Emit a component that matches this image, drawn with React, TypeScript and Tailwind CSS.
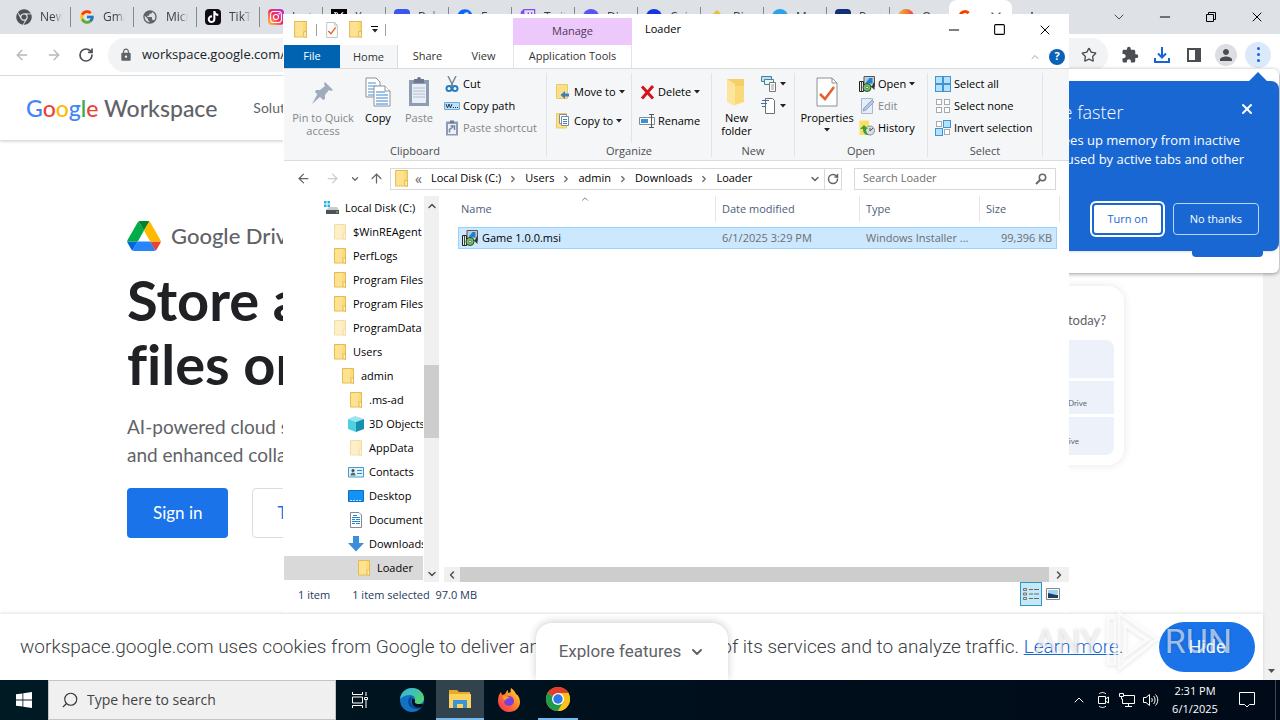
import type { ReactNode } from "react";
import {
    ArrowLeft,
    ArrowRight,
    ArrowUp,
    ChevronDown,
    ChevronLeft,
    ChevronRight,
    ChevronUp,
    Minus,
    Plus,
    RotateCw,
    Search,
    Square,
    Star,
    X,
} from "lucide-react";
import { FaChrome, FaFacebook, FaTwitch } from "react-icons/fa";
import { FaTiktok, FaXTwitter } from "react-icons/fa6";
import { FcGoogle } from "react-icons/fc";
import { BsInstagram } from "react-icons/bs";
import { MdExtension, MdLock, MdPerson, MdPublic } from "react-icons/md";

type BrowserTab = {
    title: string;
    icon: ReactNode;
};

const Dot = ({ className }: { className: string }) => (
    <span className={`block size-4 rounded-full ${className}`} />
);

const browserTabs: BrowserTab[] = [
    { title: "New Tab", icon: <FaChrome className="size-4 text-[#4d5156]" /> },
    { title: "Gmail", icon: <FcGoogle className="size-4" /> },
    { title: "Microsoft", icon: <MdPublic className="size-4 text-[#5f6368]" /> },
    {
        title: "TikTok",
        icon: (
            <span className="flex size-4 items-center justify-center rounded bg-[#120b14]">
                <FaTiktok className="size-3 text-white" />
            </span>
        ),
    },
    {
        title: "Instagram",
        icon: (
            <span className="flex size-4 items-center justify-center rounded bg-linear-to-tr from-[#ffc233] via-[#f5215c] to-[#b01be0]">
                <BsInstagram className="size-3 text-white" />
            </span>
        ),
    },
    {
        title: "X",
        icon: (
            <span className="flex size-4 items-center justify-center bg-black">
                <FaXTwitter className="size-3 text-white" />
            </span>
        ),
    },
    { title: "Behance", icon: <span className="block size-4 rounded bg-[#3d55f0]" /> },
    { title: "Facebook", icon: <FaFacebook className="size-4 text-[#0866ff]" /> },
    { title: "Twitch", icon: <FaTwitch className="size-4 text-[#8c44f7]" /> },
    { title: "Discord", icon: <Dot className="bg-[#5a54ee]" /> },
    { title: "Coinbase", icon: <Dot className="bg-[#1338e0]" /> },
    { title: "Binance", icon: <span className="m-[3px] block size-[10px] rotate-45 bg-[#f3ba2f]" /> },
    { title: "Messages", icon: <Dot className="bg-[#2aa1ea]" /> },
    { title: "PayPal", icon: <span className="block size-4 rounded bg-[#12307a]" /> },
    { title: "Opera", icon: <Dot className="bg-linear-to-r from-[#f7b731] to-[#e5383b]" /> },
];

const TabStrip = () => (
    <div className="flex h-[34px] shrink-0 items-center bg-[#dee1e6] pl-2">
        {browserTabs.map(tab => (
            <button key={tab.title} className="flex w-[63px] shrink-0 items-center gap-2 pl-2">
                <span className="shrink-0">{tab.icon}</span>
                <span className="w-[22px] overflow-hidden mask-r-from-60% text-left text-xs whitespace-nowrap text-[#3c4043]">
                    {tab.title}
                </span>
                <span className="h-5 w-px shrink-0 bg-[#85888d]" />
            </button>
        ))}
        <button className="-ml-1 flex h-[34px] w-[63px] shrink-0 items-center justify-between rounded-t-lg bg-white px-2">
            <FcGoogle className="size-4" />
            <X className="size-4 text-[#5f6368]" />
        </button>
        <button aria-label="New tab" className="ml-3">
            <Plus className="size-4 text-[#3c4043]" />
        </button>
        <div className="ml-auto flex gap-[30px] pr-[15px] text-black">
            <button aria-label="Search tabs">
                <ChevronDown className="size-4" strokeWidth={1} />
            </button>
            <button aria-label="Minimize">
                <Minus className="size-4" strokeWidth={1.5} />
            </button>
            <button aria-label="Restore">
                <svg viewBox="0 0 16 16" className="size-4" fill="none" stroke="currentColor">
                    <path d="M3.5 5.500h7v7h-7zM5.500 5.500v-2h7v7h-2" />
                </svg>
            </button>
            <button aria-label="Close">
                <X className="size-4" strokeWidth={1.5} />
            </button>
        </div>
    </div>
);

const Toolbar = () => (
    <div className="flex h-[42px] shrink-0 items-center border-b border-[#dcdee0] bg-white pr-[6px]">
        <div className="flex items-center gap-4 px-[14px]">
            <button aria-label="Back">
                <ArrowLeft className="size-4 text-[#b5b7ba]" />
            </button>
            <button aria-label="Forward">
                <ArrowRight className="size-4 text-[#b5b7ba]" />
            </button>
            <button aria-label="Reload">
                <RotateCw className="size-4 text-[#4a4d51]" strokeWidth={2.5} />
            </button>
        </div>
        <label className="flex h-[34px] flex-1 items-center gap-[9px] rounded-full bg-[#f1f3f4] px-[11px]">
            <MdLock className="size-[14px] text-[#5f6368]" />
            <input
                aria-label="Address"
                defaultValue="workspace.google.com/products/drive"
                className="min-w-0 flex-1 bg-transparent text-[13px] text-[#202124] outline-none"
            />
            <Star className="size-4 text-[#4a4d51]" />
        </label>
        <div className="flex items-center pl-[6px] text-[#4a4d51]">
            <button aria-label="Extensions" className="flex w-8 justify-center">
                <MdExtension className="size-[18px]" />
            </button>
            <button aria-label="Downloads" className="flex w-8 justify-center">
                <svg viewBox="0 0 16 16" className="size-4" fill="none" stroke="#1a62d6" strokeWidth="2">
                    <path d="M8 0v10M4 6.500l4 4 4-4M1 11v4h14v-4" />
                </svg>
            </button>
            <button aria-label="Side panel" className="flex w-8 justify-center">
                <svg viewBox="0 0 16 16" className="size-4">
                    <path d="M1 1h14v14H1zm2 2v10h6V3z" fill="currentColor" fillRule="evenodd" />
                </svg>
            </button>
            <button aria-label="Profile" className="flex w-8 justify-center">
                <span className="flex size-[22px] items-center justify-center rounded-full bg-[#dcdee3]">
                    <MdPerson className="size-[18px]" />
                </span>
            </button>
            <button aria-label="Menu" className="flex w-8 justify-center">
                <span className="flex size-[26px] flex-col items-center justify-center gap-[3px] rounded-full bg-[#dbe9fb]">
                    <span className="size-[3px] rounded-full bg-[#1a62d6]" />
                    <span className="size-[3px] rounded-full bg-[#1a62d6]" />
                    <span className="size-[3px] rounded-full bg-[#1a62d6]" />
                </span>
            </button>
        </div>
    </div>
);

const MemoryBubble = () => (
    <div className="absolute top-[69px] right-px w-[340px] rounded-md bg-white pt-3 pb-[22px] shadow-[0_1px_4px_rgba(0,0,0,0.4)]">
        <span className="absolute top-[6px] right-[14px] size-[14px] rotate-45 bg-[#1967d2]" />
        <div className="relative rounded-lg bg-[#1967d2] px-5 pt-5 pb-4 text-right text-white shadow">
            <button aria-label="Dismiss" className="absolute top-5 right-[24px]">
                <X className="size-4" strokeWidth={3} />
            </button>
            <h2 className="pr-[141px] text-lg leading-[22px] font-light whitespace-nowrap">Make Chrome faster</h2>
            <p className="mt-2 h-[72px] pr-[15px] text-[13px] leading-[19px] whitespace-nowrap">
                <span className="pr-1">Memory Saver frees up memory from inactive</span>
                <br />
                tabs so it can be used by active tabs and other
            </p>
            <div className="flex justify-end gap-[10px] text-[11px] leading-4">
                <button className="rounded border-2 border-[#1967d2] bg-white px-[13px] py-[6px] text-[#1967d2] ring-2 ring-white">
                    Turn on
                </button>
                <button className="rounded border border-[#bcd4f5] px-4 py-[6px]">No thanks</button>
            </div>
        </div>
        <span className="absolute right-4 bottom-4 h-2 w-[71px] rounded-b bg-[#1967d2]" />
    </div>
);

const DriveLogo = () => (
    <svg viewBox="0 0 87.3 78" className="h-[30px] w-[34px]">
        <path d="m6.6 66.85 3.85 6.65c.8 1.4 1.95 2.5 3.3 3.3l13.75-23.8h-27.5c0 1.55.4 3.1 1.2 4.5z" fill="#0066da" />
        <path d="m43.65 25-13.75-23.8c-1.35.8-2.5 1.9-3.3 3.3l-25.4 44a9.06 9.06 0 0 0 -1.2 4.5h27.5z" fill="#00ac47" />
        <path d="m73.55 76.8c1.35-.8 2.5-1.9 3.3-3.3l1.6-2.75 7.65-13.25c.8-1.4 1.2-2.95 1.2-4.5h-27.502l5.852 11.5z" fill="#ea4335" />
        <path d="m43.65 25 13.75-23.8c-1.35-.8-2.9-1.2-4.5-1.2h-18.5c-1.6 0-3.15.45-4.5 1.2z" fill="#00832d" />
        <path d="m59.8 53h-32.3l-13.75 23.8c1.35.8 2.9 1.2 4.5 1.2h50.8c1.6 0 3.15-.45 4.5-1.2z" fill="#2684fc" />
        <path d="m73.4 26.5-12.7-22c-.8-1.4-1.95-2.5-3.3-3.3l-13.75 23.8 16.15 28h27.45c0-1.55-.4-3.1-1.2-4.5z" fill="#ffba00" />
    </svg>
);

const WebPage = () => (
    <div className="flex min-h-0 flex-1 font-['Lato',sans-serif] [font-variant-ligatures:none]">
        <div className="flex min-w-0 flex-1 flex-col">
            <header className="flex h-[65px] shrink-0 items-center border-b border-[#e0e0e0] px-[26px] shadow-sm">
                <a href="#home" className="text-[23px] font-medium text-[#5f6368]">
                    <span className="text-[#4285f4]">G</span>
                    <span className="text-[#ea4335]">o</span>
                    <span className="text-[#fbbc04]">o</span>
                    <span className="text-[#4285f4]">g</span>
                    <span className="text-[#34a853]">l</span>
                    <span className="text-[#ea4335]">e</span> Workspace
                </a>
                <a href="#solutions" className="ml-9 text-sm text-[#5f6368]">Solutions</a>
            </header>
            <main className="flex min-h-0 flex-1 items-start justify-between overflow-hidden pr-[139px] pl-[127px]">
                <section className="pt-[79px]">
                    <div className="flex items-center gap-[10px]">
                        <DriveLogo />
                        <span className="text-[22px] leading-8 font-medium text-[#5f6368]">Google Drive</span>
                    </div>
                    <h1 className="mt-4 text-[56px] leading-16 font-bold text-[#202124]">
                        Store and share
                        <br />
                        files online
                    </h1>
                    <p className="mt-[17px] text-[19px] leading-7 text-[#5f6368]">
                        AI-powered cloud storage for seamless file sharing
                        <br />
                        and enhanced collaboration.
                    </p>
                    <div className="mt-[19px] flex gap-6 text-[17px]">
                        <button className="h-[50px] rounded bg-[#1a73e8] px-[26px] text-white">Sign in</button>
                        <button className="h-[50px] rounded border border-[#dadce0] px-6 text-[#1a73e8]">
                            Try Drive for work
                        </button>
                    </div>
                </section>
                <section className="mt-[145px] w-[320px] rounded-2xl p-[10px] text-right text-[#5f6368] shadow-[0_0_8px_rgba(0,0,0,0.1)]">
                    <p className="mt-4 pr-2 text-[13px] leading-4">What are you working on today?</p>
                    <div className="mt-3 flex flex-col gap-[3px] text-[8px]">
                        <div className="h-[38px] rounded-t-lg bg-[#edf2fa]" />
                        <div className="h-[33px] bg-[#edf2fa] pt-4 pr-[27px]">My Drive</div>
                        <div className="h-[38px] rounded-b-lg bg-[#edf2fa] pt-[18px] pr-[35px]">My Drive</div>
                    </div>
                </section>
            </main>
            <footer className="relative flex h-[66px] shrink-0 items-center justify-between bg-white pr-2 pl-5 font-['Roboto',sans-serif] shadow-[0_-1px_3px_rgba(0,0,0,0.12)]">
                <p className="text-[19px] font-light whitespace-nowrap text-[#3c4043]">
                    workspace.google.com uses cookies from Google to deliver and enhance the quality of its services and to
                    analyze traffic. <a href="#cookies" className="text-[#1967d2] underline">Learn more</a>.
                </p>
                <button className="h-[50px] w-24 shrink-0 rounded-full bg-[#1a73e8] text-lg text-white">Hide</button>
                <button className="absolute bottom-0 left-[536px] flex h-[57px] w-48 items-center justify-center gap-2 rounded-t-2xl bg-white text-[17px] text-[#5f6368] shadow-[0_-1px_8px_rgba(0,0,0,0.2)]">
                    Explore features
                    <ChevronDown className="size-4" strokeWidth={3} />
                </button>
            </footer>
        </div>
        <div className="flex w-[17px] shrink-0 flex-col justify-end bg-[#f1f1f1] pb-1">
            <svg viewBox="0 0 17 10" className="w-full">
                <path d="M5 3h7l-3.500 4z" fill="#505050" />
            </svg>
        </div>
    </div>
);

const Folder = ({ className = "size-4" }: { className?: string }) => (
    <svg viewBox="0 0 16 16" className={`shrink-0 ${className}`}>
        <path d="M2.500.5h11v14.500h-11z" fill="#fbdb7c" stroke="#e3bb52" />
        <path d="M3 1h7v13.500H3z" fill="#fde59a" opacity=".7" />
        <path d="M11 10h2.500v5.500L11 14.500z" fill="#fff0b8" stroke="#dfae3c" strokeWidth=".7" />
    </svg>
);

const OpenFolder = () => (
    <svg viewBox="0 0 24 30" className="h-[30px] w-6">
        <path d="M2 2h17v22H2z" fill="#f4cf67" />
        <path d="M2 2l8 5v22l-8-4z" fill="#fde69b" />
        <path d="M10 9h9v16l-9 3z" fill="#f9d978" />
    </svg>
);

const MsiIcon = () => (
    <svg viewBox="0 0 16 16" className="size-4 shrink-0">
        <path d="M5 .5h10.500v10H5z" fill="#c8ccd2" stroke="#555" />
        <path d="M7 2h6.500v5.500H7z" fill="#1f7fd0" />
        <path d="M7 2h3.500L7 6.500z" fill="#8fd4fa" />
        <path d="M.5 5.500h4v10h-4z" fill="#e8e8e8" stroke="#222" />
        <path d="M2.500 6v9" stroke="#444" />
        <path d="M12.500 11L15.500 5v9z" fill="#333" />
        <circle cx="8" cy="11.500" r="4" fill="#72c56b" stroke="#1f4a23" />
        <circle cx="8" cy="11.500" r="1.300" fill="#fff" stroke="#333" strokeWidth=".6" />
    </svg>
);

const CheckPage = ({ className }: { className: string }) => (
    <svg viewBox="0 0 22 30" className={className} fill="none">
        <path d="M1 1h15l5 5v23H1z" fill="#fff" stroke="#8d9096" />
        <path d="M16 1v5h5" stroke="#8d9096" />
        <path d="M4 17l5 5 9-12" stroke="#e3602f" strokeWidth="2.500" />
    </svg>
);

const PinIcon = () => (
    <svg viewBox="0 0 24 30" className="h-[30px] w-6">
        <path d="M14 5l8 8-2 1-2-1-4 5 0 4-2 1-8-8 1-2 4 0 5-4-1-2z" fill="#9eacbe" />
        <path d="M7 16l3 3-9 8z" fill="#9eacbe" />
    </svg>
);

const CopyIcon = () => (
    <svg viewBox="0 0 26 30" className="h-[30px] w-[26px]" fill="#fff">
        <path d="M1 1h10l4 4v15H1z" stroke="#8d9096" />
        <path d="M3 6h8M3 9h9M3 12h9M3 15h9M3 18h9" stroke="#4a90d0" />
        <path d="M9 9h11l5 5v15H9z" stroke="#8d9096" />
        <path d="M20 9v5h5" stroke="#8d9096" />
        <path d="M11 15h9M11 18h12M11 21h12M11 24h12M11 27h12" stroke="#3585cf" />
    </svg>
);

const PasteIcon = ({ className }: { className: string }) => (
    <svg viewBox="0 0 22 30" className={className}>
        <path d="M1 3h20v26H1z" fill="#8d9bb3" />
        <path d="M4 7h14v19H4z" fill="#e9edf5" />
        <path d="M6 2h3a2 2 0 0 1 4 0h3v4H6z" fill="#6c7a90" />
        <path d="M5 11h12M5 14h12M5 17h12M5 20h12" stroke="#b6c0d2" />
    </svg>
);

const CutIcon = () => (
    <svg viewBox="0 0 16 16" className="size-4" fill="none">
        <path d="M4 0l5 10M12 0L7 10" stroke="#7d8690" strokeWidth="1.500" />
        <circle cx="5" cy="12.500" r="2.500" stroke="#2b7cc0" strokeWidth="2" />
        <circle cx="11" cy="12.500" r="2.500" stroke="#2b7cc0" strokeWidth="2" />
    </svg>
);

const CopyPathIcon = () => (
    <svg viewBox="0 0 16 16" className="size-4">
        <path d="M.5 4.500h15v7H.5z" fill="#bfe0f7" stroke="#6cabd8" />
        <path d="M2 6l1.500 4L5 6l1.500 4L8 6M9 9.500h1M11 9.500h1M13 9.500h1" stroke="#1d3d5c" fill="none" />
    </svg>
);

const PasteShortcutIcon = () => (
    <svg viewBox="0 0 16 16" className="size-4">
        <path d="M2 1.500h12v14H2z" fill="#8d9bb3" />
        <path d="M4 4h8v10H4z" fill="#eef1f6" />
        <path d="M6 .5h4v2.500H6z" fill="#6c7a90" />
        <path d="M5.500 12.500V9.500L9 7M6.500 6H10.500v4" stroke="#7085a8" strokeWidth="1.500" fill="none" />
    </svg>
);

const MoveToIcon = () => (
    <svg viewBox="0 0 16 16" className="size-4">
        <path d="M1.500.5h11v14h-11z" fill="#fbe08a" stroke="#ebc96a" />
        <path d="M14 9.500h-4V7L5.500 11l4.500 4v-2.500h4z" fill="#3c7fc0" />
    </svg>
);

const CopyToIcon = () => (
    <svg viewBox="0 0 16 16" className="size-4">
        <path d="M1.500.5h10v14.500h-10z" fill="#fbe08a" stroke="#ebc96a" />
        <path d="M4.500 1.500h7v9h-7z" fill="#fff" stroke="#7e8ca0" />
        <path d="M6.500 3.500h7v9h-7z" fill="#fff" stroke="#7e8ca0" />
        <path d="M8 6.500h4M8 8.500h4M8 10.500h4" stroke="#3c7fc0" />
    </svg>
);

const DeleteIcon = () => (
    <svg viewBox="0 0 16 16" className="size-4">
        <path d="M3 2.500l11 12M14 2L3 14.500" stroke="#d3151a" strokeWidth="3" />
    </svg>
);

const RenameIcon = () => (
    <svg viewBox="0 0 16 16" className="size-4" fill="none">
        <path d="M.5 4.500h15v7H.5z" fill="#fff" stroke="#7e8ca0" />
        <path d="M2 6h7v4H2z" fill="#3c8fd3" />
        <path d="M10 1.500h5M12.500 1.500v13M10 14.500h5" stroke="#555" />
    </svg>
);

const NewItemIcon = () => (
    <svg viewBox="0 0 16 16" className="size-4" fill="#fff">
        <path d="M.5.5h10v5H.5z" fill="#b8e3ee" stroke="#4b8199" />
        <path d="M3.500 3.500h9v5h-9z" fill="#e6f6fa" stroke="#4b8199" />
        <path d="M8.500 6.500h6v9h-6z" stroke="#777" />
        <path d="M10 9h3M10 11h3M10 13h3" stroke="#999" />
    </svg>
);

const EasyAccessIcon = () => (
    <svg viewBox="0 0 16 16" className="size-4" fill="#fff">
        <path d="M4.500.5h7l2 2v13h-9z" stroke="#6b7078" />
        <path d="M1 2.500h7M0 5.500h6M1 8.500h3" stroke="#3c6ea5" />
    </svg>
);

const EditIcon = () => (
    <svg viewBox="0 0 16 16" className="size-4">
        <path d="M2.500.5h11v15h-11z" fill="#e7edf7" stroke="#a8b6d0" />
        <path d="M4 13l1-3 8-8 2 2-8 8z" fill="#b9c8e2" stroke="#8fa3c6" />
    </svg>
);

const HistoryIcon = () => (
    <svg viewBox="0 0 16 16" className="size-4">
        <path d="M.5.5H10V15H.5z" fill="#fbdf62" />
        <circle cx="11" cy="10.500" r="4.500" fill="#d9dde2" stroke="#8a9097" />
        <path d="M11 8v3l3-3" stroke="#555" fill="none" />
        <path d="M1 9l4-4 4 4H7c0 3 1 5 3 6-4 0-6-2-6-6z" fill="#36a13b" />
    </svg>
);

const SelectIcon = ({ filled }: { filled: boolean[] }) => (
    <svg viewBox="0 0 16 16" className="size-4">
        {filled.map((on, i) => (
            <rect
                key={i}
                x={i % 2 ? (on ? 8.5 : 9.5) : on ? 0.5 : 1.5}
                y={i > 1 ? (on ? 8.5 : 9.5) : on ? 0.5 : 1.5}
                width={on ? 7 : 5}
                height={on ? 7 : 5}
                fill={on ? "#b9e0fa" : "#fff"}
                stroke={on ? "#3d95d3" : "#a6a9ad"}
            />
        ))}
    </svg>
);

const Caret = () => (
    <svg viewBox="0 0 6 4" className="h-1 w-[6px] shrink-0">
        <path d="M0 0h6L3 3.500z" fill="#222" />
    </svg>
);

type RibbonButtonProps = {
    icon: ReactNode;
    label?: ReactNode;
    disabled?: boolean;
    menu?: boolean;
};

const SmallButton = ({ icon, label, disabled, menu }: RibbonButtonProps) => (
    <button
        disabled={disabled}
        className="flex h-[22px] items-center gap-[3px] whitespace-nowrap disabled:text-[#83868b]"
    >
        {icon}
        {label}
        {menu && <Caret />}
    </button>
);

const LargeButton = ({ icon, label, disabled, menu }: RibbonButtonProps) => (
    <button
        disabled={disabled}
        className="flex shrink-0 flex-col items-center pt-2 text-center leading-[13px] disabled:text-[#83868b]"
    >
        <span className="mb-1">{icon}</span>
        {label}
        {menu && <span className="mt-1"><Caret /></span>}
    </button>
);

type RibbonGroupProps = {
    name: string;
    className: string;
    children: ReactNode;
};

const RibbonGroup = ({ name, className, children }: RibbonGroupProps) => (
    <div className={`mt-1 mb-[3px] flex shrink-0 flex-col border-r border-[#e2e3e4] ${className}`}>
        <div className="flex flex-1">{children}</div>
        <div className="h-[14px] text-center leading-4 text-[#4a4d51]">{name}</div>
    </div>
);

const Ribbon = () => (
    <div className="flex h-[93px] shrink-0 border-y border-[#dadbdc] bg-[#f5f6f7]">
        <RibbonGroup name="Clipboard" className="w-[263px]">
            <div className="-mt-1 flex">
                <div className="flex w-[78px] justify-center">
                    <LargeButton disabled icon={<PinIcon />} label={<>Pin to Quick<br />access</>} />
                </div>
                <div className="flex w-[32px] justify-center">
                    <LargeButton icon={<CopyIcon />} label="Copy" />
                </div>
                <div className="flex w-[50px] justify-center">
                    <LargeButton disabled icon={<PasteIcon className="h-[30px] w-[22px]" />} label="Paste" />
                </div>
            </div>
            <div>
                <SmallButton icon={<CutIcon />} label="Cut" />
                <SmallButton icon={<CopyPathIcon />} label="Copy path" />
                <SmallButton disabled icon={<PasteShortcutIcon />} label="Paste shortcut" />
            </div>
        </RibbonGroup>
        <RibbonGroup name="Organize" className="w-[165px]">
            <div className="flex w-[85px] flex-col gap-[7px] border-r border-[#e2e3e4] pt-2 pl-2">
                <SmallButton menu icon={<MoveToIcon />} label="Move to" />
                <SmallButton menu icon={<CopyToIcon />} label="Copy to" />
            </div>
            <div className="flex flex-col gap-[7px] pt-2 pl-[7px]">
                <SmallButton menu icon={<DeleteIcon />} label="Delete" />
                <SmallButton icon={<RenameIcon />} label="Rename" />
            </div>
        </RibbonGroup>
        <RibbonGroup name="New" className="w-[83px]">
            <div className="-mt-1 flex w-[49px] justify-center">
                <LargeButton icon={<OpenFolder />} label={<>New<br />folder</>} />
            </div>
            <div>
                <SmallButton menu icon={<NewItemIcon />} />
                <SmallButton menu icon={<EasyAccessIcon />} />
            </div>
        </RibbonGroup>
        <RibbonGroup name="Open" className="w-[133px]">
            <div className="-mt-1 flex w-16 justify-center">
                <LargeButton menu icon={<CheckPage className="h-[30px] w-[22px]" />} label="Properties" />
            </div>
            <div>
                <SmallButton menu icon={<MsiIcon />} label="Open" />
                <SmallButton disabled icon={<EditIcon />} label="Edit" />
                <SmallButton icon={<HistoryIcon />} label="History" />
            </div>
        </RibbonGroup>
        <RibbonGroup name="Select" className="w-[115px]">
            <div className="pl-[7px]">
                <SmallButton icon={<SelectIcon filled={[true, true, true, true]} />} label="Select all" />
                <SmallButton icon={<SelectIcon filled={[false, false, false, false]} />} label="Select none" />
                <SmallButton icon={<SelectIcon filled={[false, true, true, false]} />} label="Invert selection" />
            </div>
        </RibbonGroup>
    </div>
);

const TitleBar = () => (
    <div className="flex h-[31px] shrink-0 items-center">
        <div className="flex w-[229px] shrink-0 items-center gap-[7px] pl-2">
            <Folder className="size-[17px]" />
            <span className="h-3 w-px bg-[#a0a0a0]" />
            <CheckPage className="h-4 w-4" />
            <Folder className="size-[17px]" />
            <button aria-label="Customize toolbar" className="flex flex-col items-center gap-0.5">
                <span className="h-px w-[7px] bg-black" />
                <Caret />
            </button>
            <span className="h-3 w-px bg-[#a0a0a0]" />
        </div>
        <div className="mt-1 flex h-[27px] w-[119px] shrink-0 items-center justify-center bg-[#edc9fb] text-[#4c3a55]">
            Manage
        </div>
        <h1 className="pl-[13px]">Loader</h1>
        <div className="ml-auto flex items-center gap-[31px] pr-4">
            <button aria-label="Minimize">
                <Minus className="size-4" strokeWidth={1.5} />
            </button>
            <button aria-label="Maximize">
                <Square className="size-[13px]" strokeWidth={2} />
            </button>
            <button aria-label="Close">
                <X className="size-4" strokeWidth={1.5} />
            </button>
        </div>
    </div>
);

const RibbonTabs = () => (
    <div className="flex h-[23px] shrink-0 items-stretch text-[#333]">
        <button className="w-14 bg-[#0063b1] text-white">File</button>
        <button className="-mb-px w-[58px] border-r border-[#dadbdc] bg-[#f5f6f7]">Home</button>
        <button className="w-[59px]">Share</button>
        <button className="w-[53px]">View</button>
        <button className="ml-[3px] w-[119px] border-x border-[#eadff0]">Application Tools</button>
        <div className="ml-auto flex items-center gap-2 pr-1">
            <button aria-label="Collapse ribbon">
                <ChevronUp className="size-3 text-[#a0a0a0]" />
            </button>
            <button
                aria-label="Help"
                className="flex size-4 items-center justify-center rounded-full bg-[#0a62b8] font-bold text-white"
            >
                ?
            </button>
        </div>
    </div>
);

const path = ["Local Disk (C:)", "Users", "admin", "Downloads", "Loader"];

const AddressBar = () => (
    <div className="flex h-[35px] shrink-0 items-center pr-[13px] pl-3 text-[#666]">
        <button aria-label="Back">
            <ArrowLeft className="size-[15px]" />
        </button>
        <button aria-label="Forward" className="ml-[14px]">
            <ArrowRight className="size-[15px] text-[#ccc]" />
        </button>
        <button aria-label="Recent locations" className="ml-[10px]">
            <ChevronDown className="size-[10px]" strokeWidth={3} />
        </button>
        <button aria-label="Up" className="mr-[6px] ml-[9px]">
            <ArrowUp className="size-[15px]" />
        </button>
        <nav className="flex h-[22px] flex-1 items-center border border-[#d9d9d9] pl-[2px] text-black">
            <Folder className="size-[17px]" />
            <span className="mr-[9px] ml-[5px] text-sm leading-4 text-[#666]">«</span>
            {path.map((part, i) => (
                <span key={part} className="flex items-center">
                    <a href={`#${part}`}>{part}</a>
                    {i < path.length - 1 && <ChevronRight className="mx-[7px] size-[10px] text-[#666]" strokeWidth={3} />}
                </span>
            ))}
            <button aria-label="Previous locations" className="mr-[3px] ml-auto">
                <ChevronDown className="size-3 text-[#666]" strokeWidth={3} />
            </button>
            <button aria-label="Refresh" className="flex h-full w-[17px] items-center justify-center border-l border-[#d9d9d9]">
                <RotateCw className="size-3 text-[#666]" strokeWidth={3} />
            </button>
        </nav>
        <label className="ml-3 flex h-[22px] w-[202px] items-center border border-[#d9d9d9] pr-2 pl-2">
            <input
                aria-label="Search Loader"
                placeholder="Search Loader"
                className="min-w-0 flex-1 outline-none placeholder:text-[#6d6d6d]"
            />
            <svg viewBox="0 0 12 12" className="size-3" fill="none" stroke="#666" strokeWidth="1.500">
                <circle cx="7.500" cy="4.500" r="3.200" />
                <path d="M5 7L1 11" strokeWidth="2" />
            </svg>
        </label>
    </div>
);

const DiskIcon = () => (
    <svg viewBox="0 0 16 16" className="size-4 shrink-0">
        <path d="M0 1h2.500v2.500H0zM3.500 1H6v2.500H3.500zM0 4.500h2.500V7H0zM3.500 4.500H6V7H3.500z" fill="#22b3dc" />
        <path d="M5 7h8l2 3H2z" fill="#c9cdd0" />
        <path d="M2 10h13v4H2z" fill="#4c5257" />
        <path d="M12 12h2" stroke="#6be36b" />
    </svg>
);

const CubeIcon = () => (
    <svg viewBox="0 0 16 16" className="size-4 shrink-0">
        <path d="M0 3l7-3 9 3-8 3z" fill="#9be4f0" />
        <path d="M0 3l8 3v10l-8-3z" fill="#4fd0e2" />
        <path d="M16 3L8 6v10l8-3z" fill="#1590b0" />
    </svg>
);

const ContactsIcon = () => (
    <svg viewBox="0 0 16 16" className="size-4 shrink-0">
        <path d="M.5 3.500h15v9.500H.5z" fill="#dff1fb" stroke="#4a9bc7" />
        <circle cx="5" cy="6.500" r="1.500" fill="#446" />
        <path d="M2.500 11.500c0-4 5-4 5 0z" fill="#3d7a60" />
        <path d="M9 6.500h5M9 9.500h5" stroke="#3585cf" />
    </svg>
);

const DesktopIcon = () => (
    <svg viewBox="0 0 16 16" className="size-4 shrink-0">
        <path d="M.5 2.500h15v11H.5z" fill="#1593f5" stroke="#0d6cc4" />
        <path d="M2 12.500h12" stroke="#bfe3ff" strokeDasharray="2 1" />
    </svg>
);

const DocumentIcon = () => (
    <svg viewBox="0 0 16 16" className="size-4 shrink-0">
        <path d="M2.500.5h8.500l2.500 2.500v12.500h-11z" fill="#fff" stroke="#858b92" />
        <path d="M5 3.500h4M4 5.500h8M4 7.500h3M8 7.500h4M4 9.500h8M4 11.500h3M8 11.500h4" stroke="#1f86d0" />
    </svg>
);

const DownloadsIcon = () => (
    <svg viewBox="0 0 16 16" className="size-4 shrink-0">
        <path d="M5 0h6v7h5l-8 8.500L0 7h5z" fill="#3b8edb" />
    </svg>
);

const FadedFolder = () => <Folder className="size-4 opacity-50" />;

type TreeNode = {
    name: string;
    icon: ReactNode;
    indent: string;
};

const tree: TreeNode[] = [
    { name: "Local Disk (C:)", icon: <DiskIcon />, indent: "pl-10" },
    { name: "$WinREAgent", icon: <FadedFolder />, indent: "pl-12" },
    { name: "PerfLogs", icon: <Folder />, indent: "pl-12" },
    { name: "Program Files", icon: <Folder />, indent: "pl-12" },
    { name: "Program Files (x86)", icon: <Folder />, indent: "pl-12" },
    { name: "ProgramData", icon: <FadedFolder />, indent: "pl-12" },
    { name: "Users", icon: <Folder />, indent: "pl-12" },
    { name: "admin", icon: <Folder />, indent: "pl-14" },
    { name: ".ms-ad", icon: <Folder />, indent: "pl-16" },
    { name: "3D Objects", icon: <CubeIcon />, indent: "pl-16" },
    { name: "AppData", icon: <FadedFolder />, indent: "pl-16" },
    { name: "Contacts", icon: <ContactsIcon />, indent: "pl-16" },
    { name: "Desktop", icon: <DesktopIcon />, indent: "pl-16" },
    { name: "Documents", icon: <DocumentIcon />, indent: "pl-16" },
    { name: "Downloads", icon: <DownloadsIcon />, indent: "pl-16" },
    { name: "Loader", icon: <Folder />, indent: "pl-[72px]" },
];

const FolderTree = () => (
    <div className="flex shrink-0">
        <ul className="mr-px w-[139px] overflow-hidden">
            {tree.map(node => (
                <li
                    key={node.name}
                    className={`flex h-6 items-center gap-[5px] whitespace-nowrap ${node.indent} ${node.name === "Loader" ? "bg-[#d9d9d9]" : ""}`}
                >
                    {node.icon}
                    {node.name}
                </li>
            ))}
        </ul>
        <div className="flex w-[15px] flex-col items-center bg-[#f0f0f0] text-[#505050]">
            <ChevronUp className="my-1 size-3" strokeWidth={3} />
            <span className="mt-[149px] h-[73px] w-full bg-[#cdcdcd]" />
            <ChevronDown className="mt-auto mb-[2px] size-3" strokeWidth={3} />
        </div>
    </div>
);

const FileList = () => (
    <div className="flex min-w-0 flex-1 flex-col pl-[5px]">
        <div className="relative flex-1 pr-[9px] pl-[14px]">
            <ChevronUp className="absolute -top-0.5 left-[136px] size-[10px] text-[#666]" />
            <table className="w-full table-fixed border-separate border-spacing-0">
                <colgroup>
                    <col />
                    <col className="w-36" />
                    <col className="w-[120px]" />
                    <col className="w-[77px]" />
                    <col className="w-[3px]" />
                </colgroup>
                <thead>
                    <tr className="h-[26px] text-left text-[#4c607a]">
                        <th className="border-r border-[#e5e5e5] pl-[3px] font-normal">Name</th>
                        <th className="border-r border-[#e5e5e5] pl-[6px] font-normal">Date modified</th>
                        <th className="border-r border-[#e5e5e5] pl-[6px] font-normal">Type</th>
                        <th className="pl-[6px] font-normal">Size</th>
                        <td className="border-r border-[#e5e5e5]" />
                    </tr>
                </thead>
                <tbody>
                    <tr className="h-[5px]">
                        <td colSpan={5} />
                    </tr>
                    <tr className="h-[22px] text-[#6d6d6d]">
                        <td className="border-y border-l border-[#99d1ff] bg-[#cce8ff] pl-[3px] text-black">
                            <span className="flex items-center gap-1">
                                <MsiIcon />
                                Game 1.0.0.msi
                            </span>
                        </td>
                        <td className="border-y border-[#99d1ff] bg-[#cce8ff] pl-[6px]">6/1/2025 3:29 PM</td>
                        <td className="border-y border-[#99d1ff] bg-[#cce8ff] pl-[6px] whitespace-nowrap">
                            Windows Installer ...
                        </td>
                        <td className="border-y border-r border-[#99d1ff] bg-[#cce8ff] pr-1 text-right whitespace-nowrap">
                            99,396 KB
                        </td>
                    </tr>
                </tbody>
            </table>
        </div>
        <div className="flex h-[15px] items-center bg-[#f0f0f0] text-[#505050]">
            <ChevronLeft className="mx-[2px] size-3" strokeWidth={3} />
            <span className="h-full flex-1 bg-[#cdcdcd]" />
            <ChevronRight className="mx-1 size-3" strokeWidth={3} />
        </div>
    </div>
);

const StatusBar = () => (
    <div className="flex h-[30px] shrink-0 items-start pr-[9px] pl-[14px] text-[#1e395b]">
        <span className="leading-[26px]">1 item</span>
        <span className="ml-[22px] leading-[26px]">1 item selected&nbsp; 97.0 MB</span>
        <div className="ml-auto flex items-center gap-1">
            <button
                aria-label="Details view"
                className="flex h-6 w-[22px] items-center justify-center border border-[#2f96c4] bg-[#c3e9f8]"
            >
                <svg viewBox="0 0 16 14" className="h-[14px] w-4" fill="none" stroke="#666">
                    <path d="M.5 1.500h3v2h-3zM.5 6h3v2h-3zM.5 10.500h3v2h-3z" stroke="#7c6f66" />
                    <path d="M6 2.500h4M11 2.500h5M6 7h4M11 7h5M6 11.500h4M11 11.500h5" />
                </svg>
            </button>
            <button aria-label="Thumbnail view">
                <svg viewBox="0 0 14 12" className="h-3 w-[14px]">
                    <path d="M.5.5h13v11H.5z" fill="#fff" stroke="#888" />
                    <path d="M2 2h10v4H2z" fill="#9fd3f5" />
                    <path d="M2 5l4 1 6 1v3H2z" fill="#1e3f63" />
                </svg>
            </button>
        </div>
    </div>
);

const ExplorerWindow = () => (
    <div className="absolute top-[14px] left-[283px] flex w-[786px] flex-col bg-white pl-px font-['Open_Sans',sans-serif] text-[11px] text-black">
        <TitleBar />
        <RibbonTabs />
        <Ribbon />
        <AddressBar />
        <div className="flex h-[386px]">
            <FolderTree />
            <FileList />
        </div>
        <StatusBar />
    </div>
);

const EdgeIcon = () => (
    <svg viewBox="0 0 24 24" className="size-6">
        <defs>
            <linearGradient id="edge-top" x1="0" y1="0" x2="1" y2="1">
                <stop offset="0" stopColor="#2fb4e8" />
                <stop offset="1" stopColor="#5ad65c" />
            </linearGradient>
        </defs>
        <circle cx="12" cy="12" r="12" fill="#1273c4" />
        <path d="M0 11C1 4 6 0 12 0c7 0 12 5 12 10 0 4-3 6-6 6-2 0-4-1-3-3 1-4-2-6-5-6-5 0-8 2-10 4z" fill="url(#edge-top)" />
        <path d="M9 10c-3 6 2 12 8 11 2 0 4-1 5-3-5 3-11 0-11-5 0-2 1-3 1-4-1-1-2 0-3 1z" fill="#0c4a9c" />
        <path d="M12 11c2-1 3 1 3 2-1 2 1 3 3 3l5 0-1 3c-6 2-11-1-10-8z" fill="#001119" />
    </svg>
);

const ExplorerIcon = () => (
    <svg viewBox="0 0 24 24" className="size-6">
        <path d="M1 3h8l2 2h11v3H1z" fill="#e9a825" />
        <path d="M1 7h22v14H1z" fill="#fbd160" />
        <path d="M5 21v-8h14v8h-4v-4H9v4z" fill="#3b93d8" />
    </svg>
);

const FirefoxIcon = () => (
    <svg viewBox="0 0 24 24" className="size-6">
        <defs>
            <linearGradient id="fox" x1="1" y1="0" x2="0" y2="1">
                <stop offset="0" stopColor="#ffe23a" />
                <stop offset=".5" stopColor="#ff7a24" />
                <stop offset="1" stopColor="#f0256a" />
            </linearGradient>
        </defs>
        <path d="M14 0c3 2 4 4 5 6 2 1 4 4 4 8 0 6-5 10-11 10S1 19 1 13c0-4 1-7 3-9l1 3 3-1c1-1 1-3 3-4l0 3 3-1c-1-1 0-3 0-4z" fill="url(#fox)" />
        <circle cx="12" cy="13" r="5" fill="#7a3fe0" />
        <path d="M5 9c3-2 6-1 8 1-3 0-4 1-5 3z" fill="#ff9a2b" />
    </svg>
);

const ChromeIcon = () => (
    <svg viewBox="0 0 24 24" className="size-6">
        <circle cx="12" cy="12" r="12" fill="#fbc116" />
        <path d="M12 12L1.600 6A12 12 0 0 1 22.400 6z" fill="#e33b2e" />
        <path d="M12 12L1.600 6A12 12 0 0 0 12 24l5.200-9z" fill="#229a4c" />
        <path d="M12 6h10.400A12 12 0 0 1 12 24l5.200-9z" fill="#fbc116" />
        <circle cx="12" cy="12" r="6" fill="#fff" />
        <circle cx="12" cy="12" r="4.700" fill="#2f78ea" />
    </svg>
);

const Taskbar = () => (
    <div className="relative flex h-10 shrink-0 items-stretch bg-linear-to-r from-[#001a24] via-[#00101c] to-[#000a18] font-['Open_Sans',sans-serif] text-white">
        <button aria-label="Start" className="flex w-12 items-center justify-center">
            <svg viewBox="0 0 16 16" className="size-4" fill="#fff">
                <path d="M0 2.300l6.500-.9v6.200H0zM7.300 1.300L16 0v7.600H7.300zM0 8.400h6.500v6.200L0 13.700zM7.300 8.400H16V16l-8.700-1.300z" />
            </svg>
        </button>
        <label className="flex w-72 items-center gap-2 border border-[#c4c4c4] bg-[#f0f0f0] px-3 text-[#333]">
            <Search className="size-[18px] -scale-x-100" strokeWidth={1.5} />
            <input
                aria-label="Type here to search"
                placeholder="Type here to search"
                className="min-w-0 flex-1 text-sm outline-none placeholder:text-[#444]"
            />
        </label>
        <button aria-label="Task view" className="flex w-12 items-center justify-center">
            <svg viewBox="0 0 16 16" className="size-4" fill="none" stroke="#fff">
                <path d="M.5 0v2.500h10V0M.5 5h10v6H.5zM.5 16v-2.500h10V16M14 0v4M14 8v8M12.500 5.500h3v2h-3z" />
            </svg>
        </button>
        <button aria-label="Edge" className="ml-1 flex w-12 items-center justify-center">
            <EdgeIcon />
        </button>
        <button aria-label="File Explorer" className="flex w-12 items-center justify-center border-b-2 border-[#76b9ed] bg-[#33434d]">
            <ExplorerIcon />
        </button>
        <button aria-label="Firefox" className="flex w-[50px] items-center justify-center">
            <FirefoxIcon />
        </button>
        <button aria-label="Chrome" className="mx-1 flex w-10 items-center justify-center border-b-2 border-[#76b9ed]">
            <ChromeIcon />
        </button>
        <div className="ml-auto flex items-center pr-1">
            <button aria-label="Show hidden icons" className="flex w-6 justify-center">
                <ChevronUp className="size-4" strokeWidth={1.5} />
            </button>
            <button aria-label="Meet Now" className="flex w-6 justify-center">
                <svg viewBox="0 0 16 16" className="size-4" fill="none" stroke="#fff">
                    <path d="M3.500 4.500h7v7h-7zM10.500 7l3-2v6l-3-2M4 2c2-2 5-2 7 0M4 14c2 2 5 2 7 0" />
                </svg>
            </button>
            <button aria-label="Network" className="flex w-6 justify-center">
                <svg viewBox="0 0 16 16" className="size-4" fill="none" stroke="#fff">
                    <path d="M5 3.500h10.500v8H3.500V7M9.500 11.500v3M6 14.500h7M.5 1.500h4v3h-4zM2.500 4.500V7h1" />
                </svg>
            </button>
            <button aria-label="Volume" className="flex w-6 justify-center">
                <svg viewBox="0 0 16 16" className="size-4" fill="none" stroke="#fff">
                    <path d="M.5 5.500h2.500l3.500-3v11l-3.500-3H.5zM8.500 6c1 1 1 3 0 4M10.500 4c2 2 2 6 0 8M12.500 2.500c3 3 3 8 0 11" />
                </svg>
            </button>
            <div className="w-16 text-center text-[11px] leading-[18px]">
                <div>2:31 PM</div>
                <div>6/1/2025</div>
            </div>
            <button aria-label="Notifications" className="flex w-10 justify-center">
                <svg viewBox="0 0 16 16" className="size-4" fill="none" stroke="#fff">
                    <path d="M.5.5h15v12h-5L8 15l-2.500-2.500h-5z" />
                </svg>
            </button>
            <span className="ml-2 h-10 w-px bg-[#3c4750]" />
        </div>
    </div>
);

const Watermark = () => (
    <div className="pointer-events-none absolute right-12 bottom-[48px] flex items-center gap-1 font-['Roboto',sans-serif] text-[34px] leading-[60px] text-white/60 [text-shadow:0_0_3px_rgba(0,0,0,0.2)]">
        ANY
        <svg viewBox="0 0 56 62" className="h-[62px] w-14 drop-shadow" fill="none" stroke="#fff" strokeOpacity=".75" strokeWidth="3">
            <path d="M14 3l38 26-38 30V3zM20 15l22 15-22 16zM3 8v46h7V8z" />
        </svg>
        RUN
    </div>
);

const App = () => (
    <div className="relative flex h-screen flex-col overflow-hidden bg-white font-['Open_Sans',sans-serif]">
        <TabStrip />
        <Toolbar />
        <WebPage />
        <MemoryBubble />
        <Taskbar />
        <ExplorerWindow />
        <Watermark />
    </div>
);

export default App;
